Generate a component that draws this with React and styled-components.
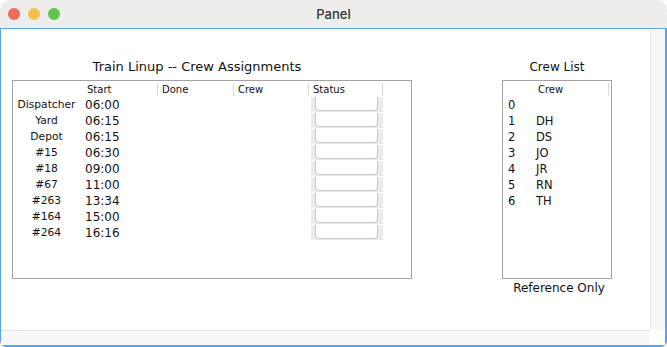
import React from "react";
import styled, { createGlobalStyle } from "styled-components";

const GlobalStyle = createGlobalStyle`
    html, body {
        margin: 0;
        padding: 0;
        background: #fff;
    }
    body {
        font-family: "DejaVu Sans", "Liberation Sans", sans-serif;
        color: #111;
    }
`;

const Window = styled.div`
    width: 667px;
    height: 347px;
    display: flex;
    flex-direction: column;
    overflow: hidden;
    background: #fff;
`;

const TitleBar = styled.div`
    height: 28px;
    flex: none;
    display: grid;
    grid-template-columns: 1fr auto 1fr;
    align-items: center;
    background: #eeedeb;
    border-radius: 10px 10px 0 0;
`;

const Lights = styled.div`
    display: flex;
    gap: 8px;
    padding-left: 8px;
`;

const Light = styled.span`
    width: 12px;
    height: 12px;
    border-radius: 50%;
    background: ${(p) => p.$color};
`;

const Title = styled.div`
    font-family: Inter, "DejaVu Sans", sans-serif;
    font-size: 13px;
    font-weight: 500;
    color: #333;
`;

const Frame = styled.div`
    flex: 1;
    display: grid;
    grid-template-columns: 1fr 15px;
    grid-template-rows: 1fr 15px;
    border: 2px solid #5ea2e6;
    border-top-width: 1px;
    border-left-width: 1px;
    border-radius: 0 0 6px 6px;
    min-height: 0;
`;

const Viewport = styled.div`
    display: flex;
    align-items: flex-start;
    gap: 90px;
    padding: 30px 0 0 11px;
`;

const VTrack = styled.div`
    background: #f7f7f7;
    border-left: 1px solid #e6e6e6;
    margin-top: 1px;
`;

const HTrack = styled.div`
    background: #f8f8f8;
    border-top: 1px solid #e4e4e4;
`;

const Corner = styled.div`
    background: #fff;
`;

const Section = styled.div`
    display: flex;
    flex-direction: column;
    width: ${(p) => p.$width}px;
`;

const SectionTitle = styled.div`
    font-size: ${(p) => p.$size || 12}px;
    line-height: 16px;
    text-align: center;
    padding-right: ${(p) => p.$shift || 0}px;
    margin-bottom: 5px;
`;

const Box = styled.div`
    box-sizing: border-box;
    height: 199px;
    border: 1px solid #a4a4a4;
    background: #fff;
`;

const Grid = styled.div`
    display: grid;
    grid-template-columns: ${(p) => p.$cols};
    height: 16px;
`;

const HeadCell = styled.div`
    align-self: center;
    height: 12px;
    line-height: 12px;
    font-size: 10px;
    padding-top: 1px;
    padding-left: ${(p) => p.$pad ?? 4}px;
    border-right: 1px solid ${(p) => (p.$sep ? "#d9d9d9" : "transparent")};
    white-space: nowrap;
`;

const LabelCell = styled.div`
    font-size: 10.7px;
    line-height: 16px;
    text-align: center;
    padding-right: 3px;
`;

const TimeCell = styled.div`
    font-size: 12px;
    line-height: 16px;
    padding-left: 2px;
`;

const StatusCell = styled.div`
    box-sizing: border-box;
    height: 16px;
    margin-left: 2px;
    padding: 0 5px 1px 4px;
    background: #ececec;
    border-bottom: 1px solid #fff;
`;

const StatusButton = styled.div`
    box-sizing: border-box;
    height: 100%;
    background: #fff;
    border: 1px solid #c8c8c8;
    border-top: none;
    border-radius: 0 0 4px 4px;
`;

const ListCell = styled.div`
    font-size: 11.5px;
    line-height: 16px;
    padding-left: ${(p) => p.$pad || 0}px;
`;

const Caption = styled.div`
    font-size: 12px;
    line-height: 16px;
    text-align: center;
    padding-left: 4px;
    margin-top: 1px;
`;

const lineup = [
    ["Dispatcher", "06:00"],
    ["Yard", "06:15"],
    ["Depot", "06:15"],
    ["#15", "06:30"],
    ["#18", "09:00"],
    ["#67", "11:00"],
    ["#263", "13:34"],
    ["#164", "15:00"],
    ["#264", "16:16"],
];

const crew = ["", "DH", "DS", "JO", "JR", "RN", "TH"];

const lineupCols = "70px 75px 76px 75px 74px 1fr";
const crewCols = "28px 1fr";

const App = () => {
    return (
        <>
            <GlobalStyle />
            <Window>
                <TitleBar>
                    <Lights>
                        <Light $color="#ee6a5e" />
                        <Light $color="#f5bf4f" />
                        <Light $color="#61c454" />
                    </Lights>
                    <Title>Panel</Title>
                    <div />
                </TitleBar>
                <Frame>
                    <Viewport>
                        <Section $width={400}>
                            <SectionTitle $size={13} $shift={30}>
                                Train Linup -- Crew Assignments
                            </SectionTitle>
                            <Box>
                                <Grid $cols={lineupCols}>
                                    <HeadCell />
                                    <HeadCell $sep>Start</HeadCell>
                                    <HeadCell $sep>Done</HeadCell>
                                    <HeadCell $sep>Crew</HeadCell>
                                    <HeadCell $sep>Status</HeadCell>
                                    <HeadCell />
                                </Grid>
                                {lineup.map(([name, time]) => (
                                    <Grid key={name} $cols={lineupCols}>
                                        <LabelCell>{name}</LabelCell>
                                        <TimeCell>{time}</TimeCell>
                                        <div />
                                        <div />
                                        <StatusCell>
                                            <StatusButton />
                                        </StatusCell>
                                        <div />
                                    </Grid>
                                ))}
                            </Box>
                        </Section>
                        <Section $width={110}>
                            <SectionTitle>Crew List</SectionTitle>
                            <Box>
                                <Grid $cols="106px 1fr">
                                    <HeadCell $sep $pad={35}>
                                        Crew
                                    </HeadCell>
                                    <HeadCell />
                                </Grid>
                                {crew.map((initials, i) => (
                                    <Grid key={i} $cols={crewCols}>
                                        <ListCell $pad={5}>{i}</ListCell>
                                        <ListCell $pad={5}>{initials}</ListCell>
                                    </Grid>
                                ))}
                            </Box>
                            <Caption>Reference Only</Caption>
                        </Section>
                    </Viewport>
                    <VTrack />
                    <HTrack />
                    <Corner />
                </Frame>
            </Window>
        </>
    );
};

export default App;
